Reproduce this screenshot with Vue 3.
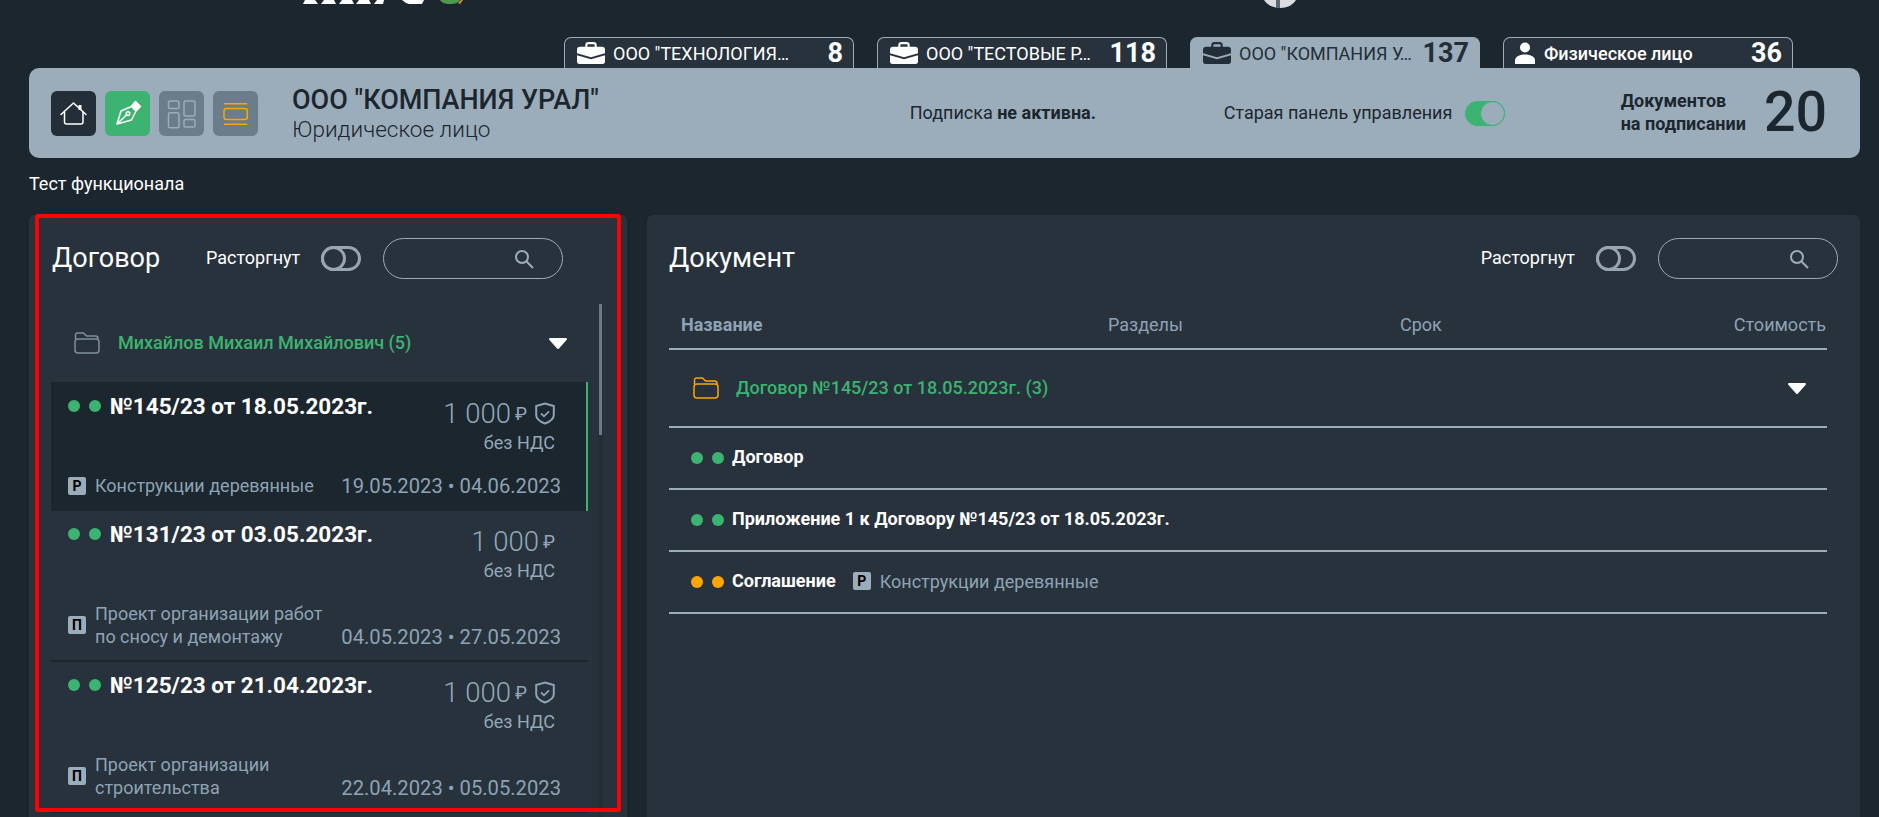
<script setup>
const tabs = [
  { name: 'ООО "ТЕХНОЛОГИЯ…', count: 8, icon: 'case' },
  { name: 'ООО "ТЕСТОВЫЕ Р…', count: 118, icon: 'case' },
  { name: 'ООО "КОМПАНИЯ У…', count: 137, icon: 'case', active: true },
  { name: 'Физическое лицо', count: 36, icon: 'person', person: true },
]

const contracts = [
  {
    title: '№145/23 от 18.05.2023г.',
    shield: true,
    active: true,
    badge: 'Р',
    desc: 'Конструкции деревянные',
    dates: '19.05.2023 • 04.06.2023',
  },
  {
    title: '№131/23 от 03.05.2023г.',
    badge: 'П',
    desc: 'Проект организации работ по сносу и демонтажу',
    dates: '04.05.2023 • 27.05.2023',
  },
  {
    title: '№125/23 от 21.04.2023г.',
    shield: true,
    badge: 'П',
    desc: 'Проект организации строительства',
    dates: '22.04.2023 • 05.05.2023',
  },
]

const docs = [
  { name: 'Договор', color: 'green' },
  { name: 'Приложение 1 к Договору №145/23 от 18.05.2023г.', color: 'green' },
  { name: 'Соглашение', color: 'orange', badge: 'Р', desc: 'Конструкции деревянные' },
]
</script>

<template>
  <div class="page">
    <!-- логотипы, обрезанные сверху -->
    <div class="logos">
      <svg class="logo-left" width="160" height="5" viewBox="0 0 160 5">
        <path fill="#fff" d="M0 4 2 0h10l3 4zM18 4 21 0h10l2 4zM36 4l3-4h10l2 4zM53 4l3-4h10l2 4zM71 4l3-4h7l-1 4zM103 3l-4-3h22l-2 4h-13z" />
        <path fill="#4f9a4a" d="M137 0h20c-2 3-5 4-10 4s-8-1-10-4z" />
        <path fill="#e8912a" d="M155 3l3-3h2l-3 4z" />
      </svg>
      <svg class="logo-right" width="36" height="9" viewBox="0 0 36 9">
        <path fill="#d9dde0" d="M2 0h32c-3 5-9 8-16 8S5 5 2 0z" />
        <rect x="14" width="4" height="8" fill="#5d6873" />
      </svg>
    </div>

    <div class="tabs">
      <div v-for="tab in tabs" :key="tab.name" class="tab" :class="{ 'tab-active': tab.active, 'tab-person': tab.person }">
        <svg v-if="tab.icon === 'case'" class="tab-icon" width="28" height="22" viewBox="0 0 27 21" fill="currentColor">
          <path d="M9 5V3a2 2 0 0 1 2-2h5a2 2 0 0 1 2 2v2" fill="none" stroke="currentColor" stroke-width="2" />
          <path d="M3 4.500h21a3 3 0 0 1 3 3v3.200l-13.500 3.800L0 10.700V7.500a3 3 0 0 1 3-3z" />
          <path d="M0 12.600l13.500 3.900 13.500-3.900V19a2 2 0 0 1-2 2H2a2 2 0 0 1-2-2z" />
        </svg>
        <svg v-else class="tab-icon" width="22" height="22" viewBox="0 0 22 22" fill="currentColor">
          <circle cx="11" cy="5.500" r="5" />
          <path d="M1 22v-3.500C1 15 5 12.500 11 12.500s10 2.500 10 6V22z" />
        </svg>
        <span class="tab-name">{{ tab.name }}</span>
        <span class="tab-count">{{ tab.count }}</span>
      </div>
    </div>

    <header class="head">
      <div class="head-btns">
        <div class="hbtn hbtn-dark">
          <svg width="45" height="45" viewBox="0 0 45 45" fill="none" stroke="#fff" stroke-width="1.500" stroke-linecap="round">
            <path d="M10 23.500 22.500 12 35 23.500" />
            <path d="M13.500 21v10a2 2 0 0 0 2 2H30a2 2 0 0 0 2-2V21" />
            <path d="M29 14v5" stroke-width="3" stroke-linecap="butt" />
          </svg>
        </div>
        <div class="hbtn hbtn-green">
          <svg width="45" height="45" viewBox="0 0 45 45" fill="none" stroke="#fff" stroke-width="1.500" stroke-linejoin="round">
            <path d="M12 33 16 20l10.500-4.500L31 20l-4.500 9z" />
            <path d="M27 14.500 30.500 10.500 35.500 15.500 31.500 19.500z" fill="#fff" />
            <path d="M12 33l9.500-9" />
            <circle cx="23" cy="22.500" r="1.800" />
          </svg>
        </div>
        <div class="hbtn hbtn-grey">
          <svg width="45" height="45" viewBox="0 0 45 45" fill="none" stroke="#9badbb" stroke-width="1.500">
            <rect x="9.500" y="10" width="10.500" height="7.500" rx="1.500" />
            <rect x="25" y="10" width="11" height="15" rx="1.500" />
            <rect x="9.500" y="21.800" width="10.500" height="15" rx="1.500" />
            <rect x="25" y="28.500" width="11" height="7.500" rx="1.500" />
          </svg>
        </div>
        <div class="hbtn hbtn-grey">
          <svg width="45" height="45" viewBox="0 0 45 45" fill="none" stroke="#ffa500" stroke-width="1.500">
            <path d="M11 12.700h23.300M11 33.300h23.300" />
            <rect x="11" y="17.500" width="23.300" height="11" rx="2.500" />
          </svg>
        </div>
      </div>

      <div class="head-title">
        <div class="company">ООО "КОМПАНИЯ УРАЛ"</div>
        <div class="company-type">Юридическое лицо</div>
      </div>

      <div class="head-sub">Подписка <b>не активна.</b></div>

      <div class="head-old">
        <span class="old-label">Старая панель управления</span>
        <span class="toggle toggle-on"></span>
      </div>

      <div class="head-docs">
        <div class="docs-label">Документов<br />на подписании</div>
        <div class="docs-count">20</div>
      </div>
    </header>

    <div class="note">Тест функционала</div>

    <main class="main">
      <section class="panel panel-left">
        <div class="panel-head">
          <h2 class="panel-title">Договор</h2>
          <span class="switch-label">Расторгнут</span>
          <span class="toggle"></span>
          <div class="search">
            <svg width="20" height="20" viewBox="0 0 20 20" fill="none" stroke="#9badbb" stroke-width="2">
              <circle cx="8" cy="8" r="6" />
              <path d="M12.500 12.500 19 19" />
            </svg>
          </div>
        </div>

        <div class="list">
          <div class="group">
            <svg class="folder" width="26" height="22" viewBox="0 0 26 22" fill="none" stroke="#7e8f9e" stroke-width="1.500">
              <path d="M1.500 7V3a2 2 0 0 1 2-2h6l3 3h9a2.500 2.500 0 0 1 2.500 2.500V7" />
              <rect x="1" y="7" width="24" height="14" rx="3" />
            </svg>
            <span class="group-name">Михайлов Михаил Михайлович (5)</span>
            <svg class="caret" width="20" height="13" viewBox="0 0 20 13">
              <path d="M2 2h16l-8 9z" fill="#fff" stroke="#fff" stroke-width="2" stroke-linejoin="round" />
            </svg>
          </div>

          <article v-for="item in contracts" :key="item.title" class="card" :class="{ 'card-active': item.active }">
            <div class="card-top">
              <div class="card-name">
                <span class="dot dot-green"></span>
                <span class="dot dot-green"></span>
                <span class="card-title">{{ item.title }}</span>
              </div>
              <div class="card-price">
                <div class="price-line">
                  <span class="price">1 000</span>
                  <span class="rub">₽</span>
                  <svg v-if="item.shield" class="shield" width="20" height="23" viewBox="0 0 20 23" fill="none" stroke="#8ea3b5" stroke-width="2">
                    <path d="M10 1.500 18.800 4v9c0 3.500-3.500 6.500-8.800 8.500C4.700 19.500 1.200 16.500 1.200 13V4z" />
                    <path d="M6 11.500l3 2.800 5-5" stroke-width="1.800" />
                  </svg>
                </div>
                <div class="vat">без НДС</div>
              </div>
            </div>
            <div class="card-bottom">
              <div class="card-desc">
                <span class="badge">{{ item.badge }}</span>
                <span class="desc">{{ item.desc }}</span>
              </div>
              <span class="dates">{{ item.dates }}</span>
            </div>
          </article>
        </div>

        <div class="scroll-track"><div class="scroll-thumb"></div></div>
        <div class="outline"></div>
      </section>

      <section class="panel panel-right">
        <div class="panel-head">
          <h2 class="panel-title">Документ</h2>
          <span class="switch-label">Расторгнут</span>
          <span class="toggle"></span>
          <div class="search">
            <svg width="20" height="20" viewBox="0 0 20 20" fill="none" stroke="#9badbb" stroke-width="2">
              <circle cx="8" cy="8" r="6" />
              <path d="M12.500 12.500 19 19" />
            </svg>
          </div>
        </div>

        <div class="table">
          <div class="thead">
            <span class="th-name">Название</span>
            <span>Разделы</span>
            <span>Срок</span>
            <span>Стоимость</span>
          </div>
          <div class="doc-group">
            <svg class="folder" width="26" height="22" viewBox="0 0 26 22" fill="none" stroke="#ffa500" stroke-width="1.500">
              <path d="M1.500 7V3a2 2 0 0 1 2-2h6l3 3h9a2.500 2.500 0 0 1 2.500 2.500V7" />
              <rect x="1" y="7" width="24" height="14" rx="3" />
            </svg>
            <span class="group-name">Договор №145/23 от 18.05.2023г. (3)</span>
            <svg class="caret" width="20" height="13" viewBox="0 0 20 13">
              <path d="M2 2h16l-8 9z" fill="#fff" stroke="#fff" stroke-width="2" stroke-linejoin="round" />
            </svg>
          </div>
          <div v-for="doc in docs" :key="doc.name" class="doc-row">
            <span class="dot" :class="'dot-' + doc.color"></span>
            <span class="dot" :class="'dot-' + doc.color"></span>
            <span class="doc-name">{{ doc.name }}</span>
            <template v-if="doc.badge">
              <span class="badge doc-badge">{{ doc.badge }}</span>
              <span class="desc doc-desc">{{ doc.desc }}</span>
            </template>
          </div>
        </div>
      </section>
    </main>
  </div>
</template>

<style>
html,
body {
  margin: 0;
  background: #1c262e;
}
</style>

<style scoped>
.page {
  height: 817px;
  overflow: hidden;
  background: #1c262e;
  font-family: Roboto, "Liberation Sans", sans-serif;
  font-size: 18px;
  color: #fff;
}

.logos {
  display: flex;
  align-items: flex-start;
  height: 37px;
  padding-left: 303px;
}

.logo-right {
  margin-left: 799px;
}

/* ВКЛАДКИ */
.tabs {
  display: flex;
  justify-content: flex-end;
  gap: 23px;
  height: 31px;
  padding-right: 86px;
}

.tab {
  display: flex;
  align-items: center;
  box-sizing: border-box;
  width: 290px;
  padding: 0 10px 0 12px;
  border: 1px solid #9badbb;
  border-bottom: none;
  border-radius: 7px 7px 0 0;
  background: #28323c;
  color: #fff;
}

.tab-active {
  background: #9badbb;
  color: #232e38;
}

.tab-icon {
  flex: none;
  margin-right: 8px;
}

.tab-person {
  padding-left: 10px;
}

.tab-person .tab-name {
  font-weight: 500;
}

.tab-name {
  flex: 1;
  white-space: nowrap;
}

.tab-count {
  font-size: 27px;
  font-weight: 700;
}

/* ШАПКА КОМПАНИИ */
.head {
  display: flex;
  align-items: center;
  height: 90px;
  margin: 0 19px 0 29px;
  padding: 0 33px 0 22px;
  border-radius: 10px;
  background: #9badbb;
  color: #1c262e;
}

.head-btns {
  display: flex;
  gap: 9px;
  margin-right: 34px;
}

.hbtn {
  width: 45px;
  height: 45px;
  border-radius: 6px;
}

.hbtn svg {
  display: block;
}

.hbtn-dark {
  background: #232e38;
}

.hbtn-green {
  background: #3cb371;
}

.hbtn-grey {
  background: #6b7c8b;
}

.head-title {
  flex: 1;
  padding-top: 2px;
}

.company {
  font-size: 27px;
  font-weight: 500;
  line-height: 30px;
}

.company-type {
  font-size: 22.500px;
  font-weight: 300;
  line-height: 28px;
}

.head-sub {
  width: 314px;
  margin-bottom: 2px;
}

.head-sub b {
  font-weight: 700;
}

.head-old {
  display: flex;
  align-items: center;
  gap: 13px;
  width: 397px;
}

.old-label {
  margin-bottom: 2px;
}

.head-docs {
  display: flex;
  align-items: center;
  gap: 18px;
}

.docs-label {
  margin-bottom: 2px;
  font-weight: 700;
  line-height: 23px;
}

.docs-count {
  font-size: 55.500px;
  font-weight: 500;
  line-height: 60px;
}

.note {
  box-sizing: border-box;
  height: 57px;
  padding: 16px 0 0 29px;
  line-height: 20px;
}

/* ПЕРЕКЛЮЧАТЕЛЬ */
.toggle {
  position: relative;
  display: block;
  flex: none;
  box-sizing: border-box;
  width: 40px;
  height: 25px;
  border: 3px solid #98a6b2;
  border-radius: 13px;
}

.toggle::after {
  content: "";
  position: absolute;
  top: -3px;
  left: -3px;
  box-sizing: border-box;
  width: 25px;
  height: 25px;
  border: 3px solid #98a6b2;
  border-radius: 50%;
  background: #28323c;
}

.toggle-on {
  border-color: #3cb371;
  background: #3cb371;
}

.toggle-on::after {
  left: auto;
  right: -3px;
  border: 1px solid #3cb371;
  background: #9badbb;
}

/* ПАНЕЛИ */
.main {
  display: flex;
  gap: 20px;
  margin: 0 19px 0 29px;
}

.panel {
  position: relative;
  box-sizing: border-box;
  height: 640px;
  border-radius: 6px;
  background: #28323c;
}

.panel-left {
  flex: none;
  width: 598px;
}

.panel-right {
  flex: 1;
}

.panel-head {
  display: flex;
  align-items: center;
  height: 41px;
  padding: 23px 22px 0;
}

.panel-left .panel-head {
  padding: 23px 0 0 23px;
}

.panel-title {
  width: 154px;
  margin: 0 0 2px;
  font-size: 27px;
  font-weight: 400;
}

.panel-right .panel-title {
  flex: 1;
}

.switch-label {
  margin: 0 21px 2px 0;
}

.search {
  display: flex;
  align-items: center;
  justify-content: flex-end;
  box-sizing: border-box;
  width: 180px;
  height: 41px;
  margin-left: 22px;
  padding-right: 28px;
  border: 1px solid #9badbb;
  border-radius: 21px;
}

.list {
  width: 537px;
  margin: 25px 0 0 22px;
}

.group {
  display: flex;
  align-items: center;
  box-sizing: border-box;
  height: 78px;
  padding: 0 20px 0 23px;
}

.folder {
  flex: none;
}

.group-name {
  flex: 1;
  margin: 0 0 2px 18px;
  font-weight: 500;
  color: #3cb371;
}

.caret {
  flex: none;
}

.card {
  box-sizing: border-box;
  padding: 10px 27px 11px 17px;
  border-bottom: 2px solid #1c262e;
}

.card-active {
  padding: 11px 25px 13px 17px;
  border-bottom: none;
  border-right: 2px solid #3cb371;
  background: #1c262e;
}

.card-top {
  display: flex;
  justify-content: space-between;
  height: 81px;
}

.card-name {
  display: flex;
  align-items: center;
  height: 26px;
}

.dot {
  flex: none;
  width: 12px;
  height: 12px;
  margin-right: 9px;
  border-radius: 50%;
}

.dot-green {
  background: #3cb371;
}

.dot-orange {
  background: #ffa500;
}

.card-title {
  font-size: 22.500px;
  font-weight: 700;
}

.card-price {
  margin: 5px 6px 0 0;
  color: #93a8ba;
  text-align: right;
}

.price-line {
  display: flex;
  align-items: center;
  justify-content: flex-end;
  height: 30px;
}

.price {
  font-size: 27.500px;
  font-weight: 300;
}

.rub {
  margin-left: 4px;
  font-size: 18px;
}

.shield {
  margin-left: 8px;
}

.vat {
  line-height: 30px;
}

.card-bottom {
  display: flex;
  align-items: flex-end;
  justify-content: space-between;
}

.card-desc {
  display: flex;
  align-items: center;
  margin-bottom: 1px;
}

.badge {
  flex: none;
  width: 18px;
  height: 18px;
  border-radius: 2px;
  background: #9badbb;
  color: #000;
  font-size: 14px;
  font-weight: 700;
  line-height: 18px;
  text-align: center;
}

.desc {
  max-width: 240px;
  margin-left: 9px;
  color: #8ea3b5;
  line-height: 23px;
}

.dates {
  color: #8ea3b5;
  font-size: 20.200px;
  line-height: 23px;
  white-space: nowrap;
}

.scroll-track {
  position: absolute;
  top: 89px;
  bottom: 0;
  left: 569px;
  width: 5px;
  background: #252e37;
}

.scroll-thumb {
  width: 3px;
  height: 131px;
  margin-left: 1px;
  background: #6c7a88;
}

/* красная рамка поверх панели */
.outline {
  position: absolute;
  top: -1px;
  left: 6px;
  box-sizing: border-box;
  width: 586px;
  height: 598px;
  border: 4px solid #f00;
  border-radius: 3px;
}

/* ТАБЛИЦА ДОКУМЕНТОВ */
.table {
  margin-right: 33px;
  padding-left: 22px;
}

.thead {
  display: grid;
  grid-template-columns: 427px 292px 1fr auto;
  align-items: end;
  height: 57px;
  padding: 0 1px 12px 12px;
  border-bottom: 2px solid #9badbb;
  color: #8ea3b5;
  line-height: 22px;
}

.th-name {
  font-weight: 700;
}

.doc-group {
  display: flex;
  align-items: center;
  height: 76px;
  padding: 0 20px 0 24px;
  border-bottom: 2px solid #9badbb;
}

.doc-group .group-name {
  margin-left: 17px;
}

.doc-row {
  display: flex;
  align-items: center;
  height: 60px;
  padding-left: 22px;
  border-bottom: 2px solid #9badbb;
}

.doc-name {
  margin: 0 0 3px -1px;
  font-weight: 700;
}

.doc-badge {
  margin: 0 0 2px 17px;
}

.doc-desc {
  margin-bottom: 2px;
}
</style>
